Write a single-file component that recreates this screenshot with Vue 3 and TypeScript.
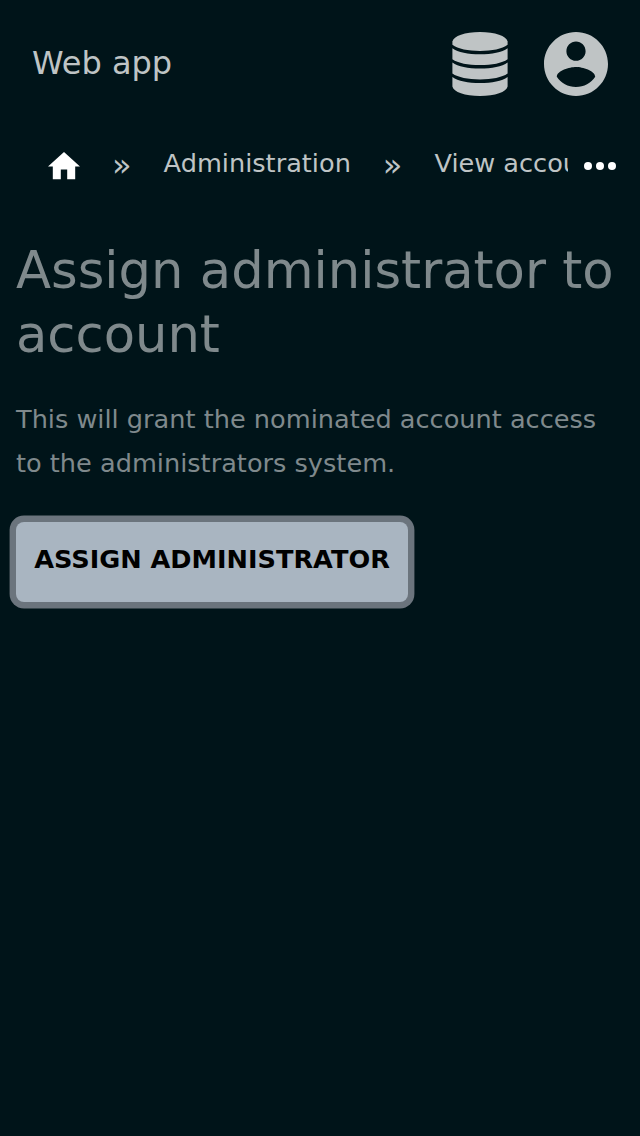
<script setup lang="ts">
const crumbs: string[] = ['Administration', 'View account']
</script>

<template>
  <div class="page">
    <header class="bar">
      <span class="brand">Web app</span>
      <div class="actions">
        <svg class="database" viewBox="0 0 56 64" aria-label="Database">
          <path d="M.4 9.500C1.500 4 13 0 28 0s26.500 4 27.600 9.500v3.200C50 16.900 40 18.900 28 18.900S6 16.900 .4 12.700z" />
          <path d="M.4 16.300C6 20.300 16 22.300 28 22.300s22-2 27.600-6v10.900C50 31.200 40 33.100 28 33.100S6 31.200 .4 27.200z" />
          <path d="M.4 30.600C6 34.600 16 36.600 28 36.600s22-2 27.600-6v10.900C50 45.500 40 47.400 28 47.400S6 45.500 .4 41.500z" />
          <path d="M.4 44.900C6 48.900 16 50.900 28 50.900s22-2 27.600-6v9.600C54.500 60 43 64 28 64S1.500 60 .4 54.500z" />
        </svg>
        <svg class="profile" viewBox="2 2 20 20" aria-label="Account">
          <path d="M12 2C6.480 2 2 6.480 2 12s4.480 10 10 10 10-4.480 10-10S17.520 2 12 2zm0 3c1.660 0 3 1.340 3 3s-1.340 3-3 3-3-1.340-3-3 1.340-3 3-3zm0 14.200c-2.500 0-4.710-1.280-6-3.220.030-1.990 4-3.080 6-3.080 1.990 0 5.970 1.090 6 3.080-1.290 1.940-3.500 3.220-6 3.220z" />
        </svg>
      </div>
    </header>
    <nav class="trail">
      <div class="crumbs">
        <svg class="home" viewBox="2 3 20 17" aria-label="Home"><path d="M10 20v-6h4v6h5v-8h3L12 3 2 12h3v8z" /></svg>
        <template v-for="crumb in crumbs" :key="crumb">
          <span class="separator">»</span>
          <span class="crumb">{{ crumb }}</span>
        </template>
      </div>
      <svg class="more" viewBox="0 0 32 8" aria-label="More"><circle cx="4" cy="4" r="4" /><circle cx="16" cy="4" r="4" /><circle cx="28" cy="4" r="4" /></svg>
    </nav>
    <main>
      <h1>Assign administrator to account</h1>
      <p>This will grant the nominated account access to the administrators system.</p>
      <button type="button">ASSIGN ADMINISTRATOR</button>
    </main>
  </div>
</template>

<style>
body { background: #001419; }
</style>

<style scoped>
.page { min-height: 1136px; background: #001419; font-family: "DejaVu Sans", sans-serif; overflow: hidden; }
.bar { height: 128px; padding: 0 32px; box-sizing: border-box; display: flex; justify-content: space-between; align-items: center; color: #bfc4c5; }
.brand { font-size: 32px; line-height: 48px; margin-top: -2px; }
.actions { display: flex; align-items: center; gap: 36px; fill: #bfc4c5; }
.database { width: 56px; height: 64px; }
.profile { width: 64px; height: 64px; }
.trail { height: 76px; padding-right: 24px; display: flex; align-items: center; }
.crumbs { width: 568px; margin: -2px 16px 0 0; padding-left: 48px; box-sizing: border-box; flex: none; display: flex; align-items: center; overflow: hidden; white-space: nowrap; color: #bfc4c5; }
.home { width: 32px; height: 27.200px; margin-top: 2px; fill: #fff; flex: none; }
.separator { font-size: 32px; line-height: 44px; margin: 0 32px; }
.crumb { font-size: 25.600px; line-height: 44px; margin-top: -5px; }
.more { width: 32px; height: 8px; fill: #fff; flex: none; }
main { padding: 34px 16px 0; }
h1 { margin: 0; font-size: 51.200px; line-height: 64px; font-weight: 400; color: #7f898c; }
p { margin: 31px 0 0; font-size: 25.600px; line-height: 44px; color: #7f898c; }
button { display: block; width: 392px; height: 80px; margin: 37px 0 0; padding: 0 0 6px; border: 0; border-radius: 8px; background: #a9b5c1; box-shadow: 0 0 0 6.400px #6b747d; color: #000; font: bold 25.600px "DejaVu Sans", sans-serif; white-space: nowrap; }
</style>
